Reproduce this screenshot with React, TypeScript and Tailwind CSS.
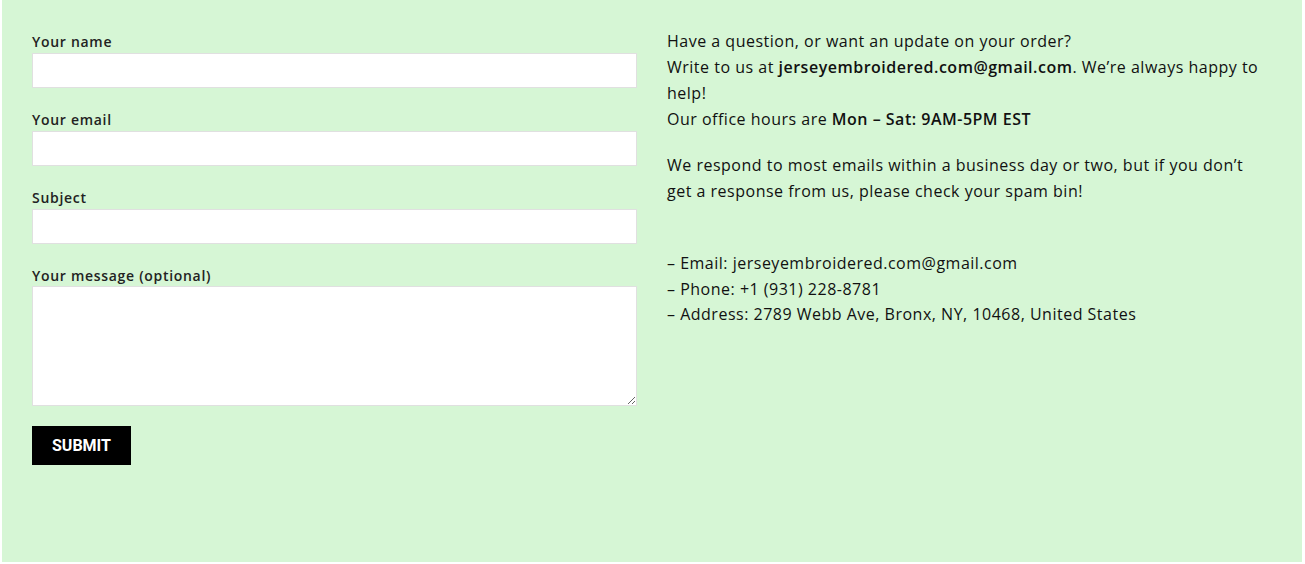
import React from "react";

const font = { fontFamily: '"Open Sans", "Liberation Sans", sans-serif' };

function Field({ label, tall }: { label: string; tall?: boolean }) {
  return (
    <div className="flex flex-col">
      <label className={`text-[14px] ${tall ? "leading-[21px]" : "leading-[22px]"} font-semibold tracking-[0.7px] text-[#222]`}>{label}</label>
      {tall ? (
        <textarea className="h-[120px] w-full bg-white border border-[#e0e0e0] outline-none resize-y" />
      ) : (
        <input className="h-[35px] w-full bg-white border border-[#e0e0e0] outline-none" />
      )}
    </div>
  );
}

export default function App() {
  return (
    <div className="bg-white w-[1305px] h-[564px]" style={font}>
      <div className="ml-[2px] w-[1300px] h-[562px] bg-[#d6f6d5] px-[30px] flex gap-[30px]">
        <div className="w-[605px] pt-[31px] flex flex-col gap-[21px]">
          <Field label="Your name" />
          <Field label="Your email" />
          <Field label="Subject" />
          <Field label="Your message (optional)" tall />
          <div className="-mt-[1px]">
            <button
              className="h-[39px] px-[20px] bg-black text-white text-[16px] font-bold uppercase"
              style={{ fontFamily: 'Roboto, "Liberation Sans", sans-serif' }}
            >
              Submit
            </button>
          </div>
        </div>
        <div className="w-[605px] pt-[28px] text-[16px] leading-[26px] tracking-[0.5px] text-[#111]">
          <p>
            <span>Have a question, or want an update on your order?</span>
            <br />
            <span>
              Write to us at <strong className="font-semibold">jerseyembroidered.com@gmail.com</strong>. We’re always happy to help!
            </span>
            <br />
            <span>
              Our office hours are <strong className="font-semibold">Mon – Sat: 9AM-5PM EST</strong>
            </span>
          </p>
          <p className="mt-[20px]">
            We respond to most emails within a business day or two, but if you don’t get a response from us, please check your spam bin!
          </p>
          <p className="mt-[47px] leading-[25.5px]">
            – Email: jerseyembroidered.com@gmail.com
            <br />– Phone: +1 (931) 228-8781
            <br />– Address: 2789 Webb Ave, Bronx, NY, 10468, United States
          </p>
        </div>
      </div>
    </div>
  );
}
